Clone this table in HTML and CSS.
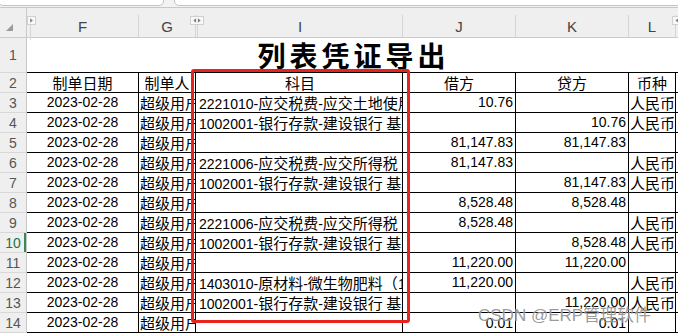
FILE: index.html
```html
<!DOCTYPE html>
<html lang="zh-CN">
<head>
<meta charset="utf-8">
<link rel="stylesheet" href="styles.css">
</head>
<body>
<div class="app">
  <div class="topbar">
    <div class="namebox"></div>
    <div class="fbar"></div>
  </div>
  <div class="sheet">
    <div class="grid colhdr">
      <div class="corner"><span class="tri"></span></div>
      <div class="ch">F</div>
      <div class="ch">G</div>
      <div class="ch hid"></div>
      <div class="ch">I</div>
      <div class="ch">J</div>
      <div class="ch">K</div>
      <div class="ch">L</div>
      <div class="ch rest"></div>
      <span class="mark m1"><svg width="8" height="7" viewBox="0 0 8 7"><path d="M2.5 1 L5.5 3.5 L2.5 6 Z" fill="#7a7f8c"/></svg></span>
      <span class="mark m2"><svg width="13" height="7" viewBox="0 0 13 7"><path d="M5.5 1 L2.5 3.5 L5.5 6 Z M7.5 1 L10.5 3.5 L7.5 6 Z" fill="#7a7f8c"/></svg></span>
      <span class="mark m3"><svg width="8" height="7" viewBox="0 0 8 7"><path d="M5.5 1 L2.5 3.5 L5.5 6 Z" fill="#7a7f8c"/></svg></span>
    </div>

    <div class="grid row r1">
      <div class="rh">1</div>
      <div class="title">列表凭证导出</div>
      <div class="x"></div>
    </div>

    <div class="grid row">
      <div class="rh">2</div>
      <div class="cell ctr"><span class="c">制单日期</span></div>
      <div class="cell ctr"><span class="c">制单人</span></div>
      <div class="hcol"></div>
      <div class="cell ctr"><span class="c">科目</span></div>
      <div class="cell ctr"><span class="c">借方</span></div>
      <div class="cell ctr"><span class="c">贷方</span></div>
      <div class="cell ctr"><span class="c">币种</span></div>
      <div class="x"></div>
    </div>

    <div class="grid row">
      <div class="rh">3</div>
      <div class="cell ctr">2023-02-28</div>
      <div class="cell lft"><span class="c">超级用户</span></div>
      <div class="hcol"></div>
      <div class="cell lft">2221010-<span class="c">应交税费</span>-<span class="c">应交土地使用税</span></div>
      <div class="cell num">10.76</div>
      <div class="cell num"></div>
      <div class="cell lft"><span class="c">人民币</span></div>
      <div class="x"></div>
    </div>

    <div class="grid row">
      <div class="rh">4</div>
      <div class="cell ctr">2023-02-28</div>
      <div class="cell lft"><span class="c">超级用户</span></div>
      <div class="hcol"></div>
      <div class="cell lft">1002001-<span class="c">银行存款</span>-<span class="c">建设银行 基本户</span></div>
      <div class="cell num"></div>
      <div class="cell num">10.76</div>
      <div class="cell lft"><span class="c">人民币</span></div>
      <div class="x"></div>
    </div>

    <div class="grid row">
      <div class="rh">5</div>
      <div class="cell ctr">2023-02-28</div>
      <div class="cell lft"><span class="c">超级用户</span></div>
      <div class="hcol"></div>
      <div class="cell lft"></div>
      <div class="cell num">81,147.83</div>
      <div class="cell num">81,147.83</div>
      <div class="cell lft"></div>
      <div class="x"></div>
    </div>

    <div class="grid row">
      <div class="rh">6</div>
      <div class="cell ctr">2023-02-28</div>
      <div class="cell lft"><span class="c">超级用户</span></div>
      <div class="hcol"></div>
      <div class="cell lft">2221006-<span class="c">应交税费</span>-<span class="c">应交所得税</span></div>
      <div class="cell num">81,147.83</div>
      <div class="cell num"></div>
      <div class="cell lft"><span class="c">人民币</span></div>
      <div class="x"></div>
    </div>

    <div class="grid row">
      <div class="rh">7</div>
      <div class="cell ctr">2023-02-28</div>
      <div class="cell lft"><span class="c">超级用户</span></div>
      <div class="hcol"></div>
      <div class="cell lft">1002001-<span class="c">银行存款</span>-<span class="c">建设银行 基本户</span></div>
      <div class="cell num"></div>
      <div class="cell num">81,147.83</div>
      <div class="cell lft"><span class="c">人民币</span></div>
      <div class="x"></div>
    </div>

    <div class="grid row">
      <div class="rh">8</div>
      <div class="cell ctr">2023-02-28</div>
      <div class="cell lft"><span class="c">超级用户</span></div>
      <div class="hcol"></div>
      <div class="cell lft"></div>
      <div class="cell num">8,528.48</div>
      <div class="cell num">8,528.48</div>
      <div class="cell lft"></div>
      <div class="x"></div>
    </div>

    <div class="grid row">
      <div class="rh">9</div>
      <div class="cell ctr">2023-02-28</div>
      <div class="cell lft"><span class="c">超级用户</span></div>
      <div class="hcol"></div>
      <div class="cell lft">2221006-<span class="c">应交税费</span>-<span class="c">应交所得税</span></div>
      <div class="cell num">8,528.48</div>
      <div class="cell num"></div>
      <div class="cell lft"><span class="c">人民币</span></div>
      <div class="x"></div>
    </div>

    <div class="grid row">
      <div class="rh sel">10</div>
      <div class="cell ctr">2023-02-28</div>
      <div class="cell lft"><span class="c">超级用户</span></div>
      <div class="hcol"></div>
      <div class="cell lft">1002001-<span class="c">银行存款</span>-<span class="c">建设银行 基本户</span></div>
      <div class="cell num"></div>
      <div class="cell num">8,528.48</div>
      <div class="cell lft"><span class="c">人民币</span></div>
      <div class="x"></div>
    </div>

    <div class="grid row">
      <div class="rh">11</div>
      <div class="cell ctr">2023-02-28</div>
      <div class="cell lft"><span class="c">超级用户</span></div>
      <div class="hcol"></div>
      <div class="cell lft"></div>
      <div class="cell num">11,220.00</div>
      <div class="cell num">11,220.00</div>
      <div class="cell lft"></div>
      <div class="x"></div>
    </div>

    <div class="grid row">
      <div class="rh">12</div>
      <div class="cell ctr">2023-02-28</div>
      <div class="cell lft"><span class="c">超级用户</span></div>
      <div class="hcol"></div>
      <div class="cell lft">1403010-<span class="c">原材料</span>-<span class="c">微生物肥料（</span>1）</div>
      <div class="cell num">11,220.00</div>
      <div class="cell num"></div>
      <div class="cell lft"><span class="c">人民币</span></div>
      <div class="x"></div>
    </div>

    <div class="grid row">
      <div class="rh">13</div>
      <div class="cell ctr">2023-02-28</div>
      <div class="cell lft"><span class="c">超级用户</span></div>
      <div class="hcol"></div>
      <div class="cell lft">1002001-<span class="c">银行存款</span>-<span class="c">建设银行 基本户</span></div>
      <div class="cell num"></div>
      <div class="cell num">11,220.00</div>
      <div class="cell lft"><span class="c">人民币</span></div>
      <div class="x"></div>
    </div>

    <div class="grid row">
      <div class="rh">14</div>
      <div class="cell ctr">2023-02-28</div>
      <div class="cell lft"><span class="c">超级用户</span></div>
      <div class="hcol"></div>
      <div class="cell lft"></div>
      <div class="cell num low">0.01</div>
      <div class="cell num low">0.01</div>
      <div class="cell lft"></div>
      <div class="x"></div>
    </div>
  </div>

  <div class="redbox"></div>
  <div class="watermark">CSDN @ERP管理软件</div>
</div>
</body>
</html>
```

FILE: styles.css
```css
html, body {
  margin: 0;
  padding: 0;
  background: #ffffff;
}
body {
  width: 678px;
  height: 335px;
  overflow: hidden;
  font-family: "Liberation Sans", "Noto Sans CJK SC", sans-serif;
  color: #000;
}
.app {
  position: relative;
  width: 678px;
  height: 335px;
  overflow: hidden;
}
.topbar {
  height: 7px;
  background: #f2f2f2;
  border-bottom: 1px solid #c8c8c8;
  display: flex;
  gap: 10px;
  overflow: hidden;
}
.namebox, .fbar {
  height: 5px;
  margin-top: -1px;
  background: #ffffff;
  border: 1px solid #c4c4c4;
  border-radius: 0 0 5px 5px;
}
.namebox { width: 164px; margin-left: -2px; }
.fbar { flex: 1; margin-right: -4px; }

.grid {
  display: grid;
  grid-template-columns: 27px 112px 57px 2px 205px 113px 113px 47px 1fr;
}
.colhdr {
  position: relative;
  height: 29px;
  background: #efefef;
  border-bottom: 1px solid #cbcbcb;
}
.corner {
  position: relative;
  border-right: 1px solid #cbcbcb;
}
.tri {
  position: absolute;
  left: 6px;
  top: 16px;
  width: 0;
  height: 0;
  border-left: 7px solid transparent;
  border-bottom: 7px solid #9a9a9a;
}
.ch {
  margin-top: 7px;
  height: 22px;
  border-right: 1px solid #d5d5d5;
  display: flex;
  align-items: center;
  justify-content: center;
  font-size: 15px;
  color: #444;
}
.ch.rest { border-right: none; }
.mark {
  position: absolute;
  top: 8px;
  height: 7px;
  background: #f8f8f8;
  border: 1px solid #d0d0d0;
  display: flex;
  align-items: center;
  justify-content: center;
}
.mark svg { display: block; }
.m1 { left: 27px; width: 7px; }
.m2 { left: 190px; width: 12px; }
.m3 { left: 672px; width: 8px; }
.m1::after {
  content: "";
  position: absolute;
  left: 2px;
  top: 8px;
  width: 0;
  height: 15px;
  border-left: 1px solid #d5d5d5;
}

.row {
  height: 20px;
}
.r1 { height: 35px; }
.rh {
  background: #efefef;
  border-right: 1px solid #c6c6c6;
  border-bottom: 1px solid #d8d8d8;
  color: #555;
  font-size: 14px;
  display: flex;
  align-items: center;
  justify-content: center;
}
.rh.sel {
  color: #217346;
  box-shadow: inset -2px 0 0 #3a8a57;
}
.title {
  grid-column: 2 / 9;
  border-bottom: 1px solid #000;
  display: flex;
  align-items: flex-end;
  justify-content: center;
  padding-left: 4px;
  padding-bottom: 1px;
  font-family: "Noto Sans CJK SC", sans-serif;
  font-weight: 700;
  font-size: 28px;
  letter-spacing: 4px;
  line-height: 32px;
}
.x {
  border-bottom: 1px solid #000;
}
.hcol {
  border-bottom: 1px solid #000;
}
.cell {
  border-right: 1px solid #000;
  border-bottom: 1px solid #000;
  height: 19px;
  line-height: 19px;
  font-size: 14px;
  white-space: nowrap;
  overflow: hidden;
}
.ctr { text-align: center; }
.lft { text-align: left; padding-left: 1px; }
.num { text-align: right; padding-right: 2px; }
.low { line-height: 21px; }
.c {
  font-family: "Noto Sans CJK SC", sans-serif;
  font-size: 15px;
}
.redbox {
  position: absolute;
  left: 191px;
  top: 69px;
  width: 219px;
  height: 254px;
  box-sizing: border-box;
  border: 3px solid #e8231c;
  border-radius: 3px;
}
.watermark {
  position: absolute;
  left: 478px;
  top: 306px;
  font-size: 17px;
  line-height: 20px;
  color: rgba(110, 110, 110, 0.7);
  text-shadow: 0 0 1px rgba(255, 255, 255, 0.9);
  white-space: nowrap;
}
```
